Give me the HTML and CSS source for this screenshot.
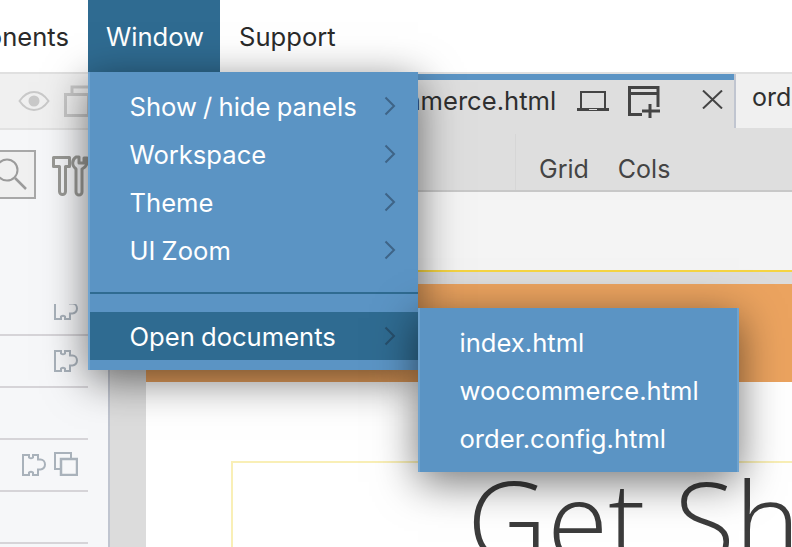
FILE: index.html
```html
<!DOCTYPE html>
<html lang="en">
<head>
<meta charset="utf-8">
<title>Window menu</title>
<link rel="stylesheet" href="styles.css">
</head>
<body>
<svg class="defs" aria-hidden="true">
  <symbol id="puzzle" viewBox="0 0 24 22"><path d="M1 1H7v2.500a3 2.500 0 0 0 4 0V1h5v4.500h2.500a4.500 5 0 0 1 0 10H16V21h-5v-2.500a3 2.500 0 0 0-4 0V21H1z" fill="none" stroke="currentColor" stroke-width="2"/></symbol>
</svg>
<header class="menubar">
  <div class="menubar-lead"><span class="menubar-item">Components</span></div>
  <span class="menubar-item is-open">Window</span>
  <span class="menubar-item">Support</span>
  <div class="menu">
    <div class="menu-row"><span>Show / hide panels</span><svg class="chev" viewBox="0 0 12 20"><path d="M1.500 1.500 10 10l-8.500 8.500"/></svg></div>
    <div class="menu-row"><span>Workspace</span><svg class="chev" viewBox="0 0 12 20"><path d="M1.500 1.500 10 10l-8.500 8.500"/></svg></div>
    <div class="menu-row"><span>Theme</span><svg class="chev" viewBox="0 0 12 20"><path d="M1.500 1.500 10 10l-8.500 8.500"/></svg></div>
    <div class="menu-row"><span>UI Zoom</span><svg class="chev" viewBox="0 0 12 20"><path d="M1.500 1.500 10 10l-8.500 8.500"/></svg></div>
    <div class="menu-divider"></div>
    <div class="menu-row is-active"><span>Open documents</span><svg class="chev" viewBox="0 0 12 20"><path d="M1.500 1.500 10 10l-8.500 8.500"/></svg>
      <div class="submenu">
        <div class="submenu-row">index.html</div>
        <div class="submenu-row">woocommerce.html</div>
        <div class="submenu-row">order.config.html</div>
      </div>
    </div>
  </div>
</header>
<main class="workspace">
  <aside class="panel">
    <div class="panel-top">
      <svg class="icon-eye" viewBox="0 0 32 22"><path d="M1.500 11C6 4.500 11 2 16 2s10 2.500 14.500 9C26 17.500 21 20 16 20S6 17.500 1.500 11z" fill="none" stroke="currentColor" stroke-width="2"/><circle cx="16" cy="11" r="5.500" fill="currentColor"/></svg>
      <svg class="icon-views" viewBox="0 0 34 32"><path d="M8 8V2h24v22h-6" fill="none" stroke="currentColor" stroke-width="3"/><rect x="1.500" y="9.500" width="23" height="21" fill="none" stroke="currentColor" stroke-width="3"/></svg>
    </div>
    <div class="panel-tools">
      <div class="search"><svg class="icon-search" viewBox="0 0 36 36"><circle cx="12" cy="13" r="10.500" fill="none" stroke="currentColor" stroke-width="2"/><path d="m20 21 11 11" stroke="currentColor" stroke-width="2.500"/></svg></div>
      <svg class="icon-tools" viewBox="0 0 36 42"><path d="M1.500 2.500h16v9h-4v25a3 3 0 0 1-6 0v-25h-6z" fill="none" stroke="currentColor" stroke-width="3" stroke-linejoin="round"/><path d="M24 2c-3 2-4 4-3 8 .5 2 2 3 3 4v23a3 3 0 0 0 6 0V14c2-1 5-3 5-7V3l-3 0v5h-5V2z" fill="none" stroke="currentColor" stroke-width="3" stroke-linejoin="round"/></svg>
    </div>
    <div class="layer-list">
      <div class="layer-row is-first"><svg class="icon-layer"><use href="#puzzle"/></svg></div>
      <div class="layer-row"><svg class="icon-layer"><use href="#puzzle"/></svg></div>
      <div class="layer-row"></div>
      <div class="layer-row"><svg class="icon-layer"><use href="#puzzle"/></svg><svg class="icon-copy" viewBox="0 0 24 24"><path d="M7 17H1V1h16v6" fill="none" stroke="currentColor" stroke-width="2"/><rect x="7" y="7" width="16" height="16" fill="none" stroke="currentColor" stroke-width="2.500"/></svg></div>
      <div class="layer-row"></div>
    </div>
  </aside>
  <section class="editor">
    <div class="tabs">
      <div class="tab tab-index">index.html</div>
      <div class="tab tab-active">
        <span>woocommerce.html</span>
        <svg class="icon-laptop" viewBox="0 0 32 22"><path d="M4 20V3h24v17" fill="none" stroke="currentColor" stroke-width="2"/><path d="M0 20.500h32" stroke="currentColor" stroke-width="3"/><path d="M12 20.500h8" stroke="#dedede" stroke-width="1"/></svg>
        <svg class="icon-addframe" viewBox="0 0 32 32"><path d="M30 21V1.500H1.500v27H14" fill="none" stroke="currentColor" stroke-width="3"/><path d="M1.500 7.500H30M22 18v14M14 25h18" fill="none" stroke="currentColor" stroke-width="3"/></svg>
        <svg class="icon-close" viewBox="0 0 21 19"><path d="M1 0.500 20 18.500M20 0.500 1 18.500" stroke="currentColor" stroke-width="2" fill="none"/></svg>
      </div>
      <div class="tab tab-other">order.config.html</div>
    </div>
    <div class="toolbar">
      <div class="toolbar-lead"></div>
      <div class="toolbar-group"><span>Grid</span><span>Cols</span></div>
    </div>
    <div class="breadcrumb-bar"></div>
    <div class="canvas">
      <article class="doc">
        <div class="hero"></div>
        <div class="doc-body">
          <div class="doc-box"><h1>Get Shop</h1></div>
        </div>
      </article>
    </div>
  </section>
</main>
</body>
</html>
```
FILE: styles.css
```css
* { box-sizing: border-box; }
html, body { margin: 0; height: 547px; overflow: hidden; }
body { font-family: Inter, "Liberation Sans", sans-serif; font-size: 25.6px; word-spacing: -1px; color: #2a2a2a; background: #fff; display: flex; flex-direction: column; }
.defs { width: 0; height: 0; display: block; flex: none; }

.menubar { flex: 0 0 72px; min-height: 0; display: flex; position: relative; z-index: 5; }
.menubar-lead { flex: 0 0 88px; min-width: 0; display: flex; justify-content: flex-end; }
.menubar-lead .menubar-item { padding-right: 19px; }
.menubar-item { flex: none; padding: 0 16px 0 18px; display: flex; align-items: center; white-space: nowrap; }
.menubar-item.is-open { background: #2f6b91; color: #fff; }
.menubar-item.is-open + .menubar-item { padding-left: 19px; }

.menu { position: absolute; left: 88px; top: 72px; width: 330px; height: 298px; padding-top: 11px; background: #5b94c4; border-left: 2px solid #6ea3cf; color: #fff; box-shadow: 0 10px 40px rgba(0,0,0,.55); }
.menu-row { height: 48px; padding: 0 22px 2px 39.500px; display: flex; align-items: center; justify-content: space-between; position: relative; }
.menu-row.is-active { background: #2f6b91; padding-bottom: 0; }
.menu-divider { height: 2px; margin: 17px 0 18px; background: #2f6b91; }
.chev { width: 12px; height: 20px; fill: none; stroke: #3e6487; stroke-width: 2; }
.is-active .chev { stroke: #274f6c; }

.submenu { position: absolute; left: 328px; top: -4px; width: 321px; height: 164px; padding-top: 11px; background: #5b94c4; border-left: 2px solid #6ea3cf; border-right: 2px solid #6ea3cf; box-shadow: 0 10px 40px rgba(0,0,0,.55); }
.submenu-row { height: 48px; padding: 0 0 2px 39.500px; display: flex; align-items: center; }

.workspace { flex: 1; min-height: 0; display: flex; border-top: 2px solid #e0e0e0; }

.panel { flex: 0 0 110px; background: #f6f7f9; border-right: 2px solid #c0c5d0; display: flex; flex-direction: column; }
.panel-top { height: 56px; flex: none; background: #f0f0f0; border-bottom: 2px solid #e2e2e2; display: flex; align-items: center; padding-left: 18px; gap: 14px; color: #c9c9c9; overflow: hidden; }
.icon-eye { width: 32px; height: 22px; flex: none; }
.icon-views { width: 34px; height: 32px; flex: none; }
.panel-tools { height: 174px; flex: none; padding-top: 20px; display: flex; align-items: flex-start; overflow: hidden; }
.search { flex: 0 0 36px; height: 49px; background: #f0f0f0; border: 2px solid #a8a8a8; border-left: 0; display: flex; align-items: center; overflow: hidden; color: #9b9b9b; }
.icon-search { flex: none; width: 36px; height: 36px; margin-left: -5px; }
.icon-tools { flex: none; width: 36px; height: 42px; margin: 5px 0 0 16px; color: #9a9a96; }
.layer-list { padding-right: 20px; display: flex; flex-direction: column; }
.layer-row { height: 52px; flex: none; border-bottom: 2px solid #d6d4d8; display: flex; justify-content: flex-end; align-items: flex-end; gap: 8px; padding: 0 10px 14px 0; color: #a9b2bb; overflow: hidden; }
.layer-row.is-first { height: 32px; }
.icon-layer { width: 24px; height: 22px; flex: none; }
.icon-copy { width: 24px; height: 24px; flex: none; }

.editor { flex: 1; min-width: 0; display: flex; flex-direction: column; overflow: hidden; background: #dcdcdc; }
.tabs { height: 54px; flex: none; display: flex; background: #dedede; white-space: nowrap; }
.tab { flex: none; display: flex; align-items: center; color: #2f2f2f; padding-bottom: 8px; }
.tab-index { width: 191px; padding-left: 16px; }
.tab-active { width: 433px; padding: 0 11px 8px 16px; border-top: 6px solid #5b94c4; }
.tab-other { flex: 1; background: #f0f0f0; border-left: 2px solid #c0c5d0; padding-left: 16px; font-size: 25px; }
.icon-laptop { width: 32px; height: 22px; margin-left: 21px; color: #444; flex: none; }
.icon-addframe { width: 32px; height: 32px; margin: 3px 0 0 19px; color: #444; flex: none; }
.icon-close { width: 21px; height: 19px; margin: 0 0 2px auto; color: #444; flex: none; }

.toolbar { height: 64px; flex: none; background: #dedede; border-bottom: 2px solid #c8c8c8; display: flex; color: #444; font-size: 25px; }
.toolbar-lead { flex: 0 0 406px; margin: 6px 0 0; border-right: 1px solid #d6d6d6; }
.toolbar-group { display: flex; gap: 29px; align-items: center; padding: 20px 0 0 23px; }

.breadcrumb-bar { height: 80px; flex: none; background: #f4f4f4; border-bottom: 2px solid #f5d442; }
.canvas { flex: 1; min-height: 0; padding: 12px 0 0 36px; background: #dcdcdc; }
.doc { background: #fff; height: 100%; }
.hero { height: 98px; background: #eba35f; }
.doc-body { padding: 79px 0 0 85px; }
.doc-box { border: 2px solid #f9efb6; border-right: 0; height: 200px; overflow: hidden; }
.doc-box h1 { margin: 0; padding: 1px 0 0 234px; font: 300 111px/1 "Open Sans", sans-serif; word-spacing: 0; color: #3c3c3c; white-space: nowrap; }
```
